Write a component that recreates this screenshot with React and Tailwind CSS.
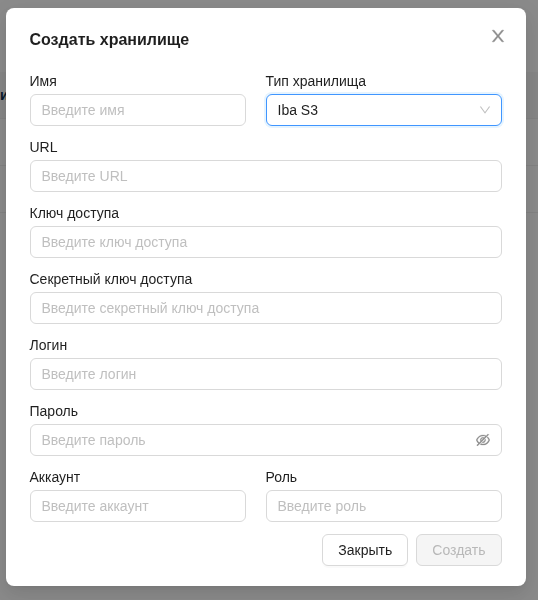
import { useState } from "react";
import { AiOutlineDown, AiOutlineEyeInvisible } from "react-icons/ai";

const inputClass =
  "block h-8 w-full min-w-0 rounded-md border border-[#d9d9d9] bg-white px-[11px] text-sm text-[#1f1f1f] outline-none placeholder:text-[#bfbfbf] focus:border-[#4096ff]";

// Crops the empty margin that the icons carry inside their 1024 unit square.
const tightViewBox = "64 64 896 896";

function Field({ id, label, className = "", children }) {
  return (
    <div className={`flex min-w-0 flex-col gap-0.5 ${className}`}>
      <label htmlFor={id} className="self-start text-sm leading-[22px]">
        {label}
      </label>
      {children}
    </div>
  );
}

function TextField({ id, label, placeholder, className }) {
  return (
    <Field id={id} label={label} className={className}>
      <input id={id} type="text" placeholder={placeholder} className={inputClass} />
    </Field>
  );
}

function CloseIcon() {
  return (
    <svg
      viewBox={tightViewBox}
      className="size-4"
      fill="currentColor"
      stroke="currentColor"
      strokeWidth="26"
      aria-hidden="true"
    >
      <path d="M563.8 512l262.5-312.9c4.4-5.2.7-13.1-6.1-13.1h-79.8c-4.7 0-9.2 2.1-12.3 5.7L511.6 449.8 295.1 191.7c-3-3.6-7.5-5.7-12.3-5.7H203c-6.8 0-10.5 7.9-6.1 13.1L459.4 512 196.9 824.9A7.95 7.95 0 0 0 203 838h79.8c4.7 0 9.2-2.1 12.3-5.7l216.5-258.1 216.5 258.1c3 3.6 7.5 5.7 12.3 5.7h79.8c6.8 0 10.5-7.9 6.1-13.1L563.8 512z" />
    </svg>
  );
}

function PageBehind() {
  return (
    <div className="min-h-screen bg-[#fcfcfc] pt-[72px]" aria-hidden="true">
      <div className="flex h-[47px] items-center border-b border-[#ececec] bg-[#f4f4f4] text-sm font-bold text-[#0b2f4f]">
        и
      </div>
      <div className="h-[47px] border-b border-[#ececec]" />
      <div className="h-[47px] border-b border-[#ececec]" />
    </div>
  );
}

export default function App() {
  const [visible, setVisible] = useState(false);

  return (
    <div className="font-['Liberation_Sans',Arial,sans-serif] text-[#1f1f1f]">
      <PageBehind />
      <div className="fixed inset-0 overflow-hidden bg-black/45 pt-2 pr-[7px]">
        <div
          role="dialog"
          aria-modal="true"
          aria-labelledby="dialog-title"
          className="mx-auto max-w-[520px] rounded-lg bg-white px-6 py-5 shadow-[0_6px_16px_0_rgba(0,0,0,0.08),0_3px_6px_-4px_rgba(0,0,0,0.12),0_9px_28px_8px_rgba(0,0,0,0.05)]"
        >
          <header className="flex items-start justify-between">
            <h2 id="dialog-title" className="text-base leading-6 font-bold">
              Создать хранилище
            </h2>
            <button
              type="button"
              aria-label="Закрыть окно"
              className="-mt-1 -mr-2 flex size-6 items-center justify-center text-[#8c8c8c]"
            >
              <CloseIcon />
            </button>
          </header>

          <form className="mt-[18px] flex flex-col gap-2.5" onSubmit={(e) => e.preventDefault()}>
            <div className="grid grid-cols-2">
              <TextField id="name" label="Имя" placeholder="Введите имя" className="pr-5" />
              <Field id="type" label="Тип хранилища">
                <div className="grid items-center">
                  <select
                    id="type"
                    defaultValue="s3"
                    className="col-start-1 row-start-1 h-8 w-full appearance-none rounded-md border border-[#4096ff] bg-white px-[11px] text-sm shadow-[0_0_0_2px_rgba(5,145,255,0.1)] outline-none"
                  >
                    <option value="s3">Iba S3</option>
                  </select>
                  <AiOutlineDown
                    size={12}
                    viewBox={tightViewBox}
                    className="pointer-events-none col-start-1 row-start-1 mr-[11px] justify-self-end text-[#bfbfbf]"
                  />
                </div>
              </Field>
            </div>
            <TextField id="url" label="URL" placeholder="Введите URL" />
            <TextField id="access-key" label="Ключ доступа" placeholder="Введите ключ доступа" />
            <TextField
              id="secret-key"
              label="Секретный ключ доступа"
              placeholder="Введите секретный ключ доступа"
            />
            <TextField id="login" label="Логин" placeholder="Введите логин" />
            <Field id="password" label="Пароль">
              <div className="flex h-8 items-center rounded-md border border-[#d9d9d9] px-[11px] focus-within:border-[#4096ff]">
                <input
                  id="password"
                  type={visible ? "text" : "password"}
                  placeholder="Введите пароль"
                  className="min-w-0 flex-1 bg-transparent text-sm outline-none placeholder:text-[#bfbfbf]"
                />
                <button
                  type="button"
                  aria-label="Показать пароль"
                  onClick={() => setVisible(!visible)}
                  className="text-[#8c8c8c]"
                >
                  <AiOutlineEyeInvisible size={14} viewBox={tightViewBox} strokeWidth={16} />
                </button>
              </div>
            </Field>
            <div className="grid grid-cols-2">
              <TextField id="account" label="Аккаунт" placeholder="Введите аккаунт" className="pr-5" />
              <TextField id="role" label="Роль" placeholder="Введите роль" />
            </div>
            <footer className="mt-0.5 flex justify-end gap-2">
              <button
                type="button"
                className="h-8 rounded-md border border-[#d9d9d9] bg-white px-[15px] text-sm shadow-[0_2px_0_rgba(0,0,0,0.02)]"
              >
                Закрыть
              </button>
              <button
                type="submit"
                disabled
                className="h-8 rounded-md border border-[#d9d9d9] bg-[#f5f5f5] px-[15px] text-sm text-[#b8b8b8]"
              >
                Создать
              </button>
            </footer>
          </form>
        </div>
      </div>
    </div>
  );
}
